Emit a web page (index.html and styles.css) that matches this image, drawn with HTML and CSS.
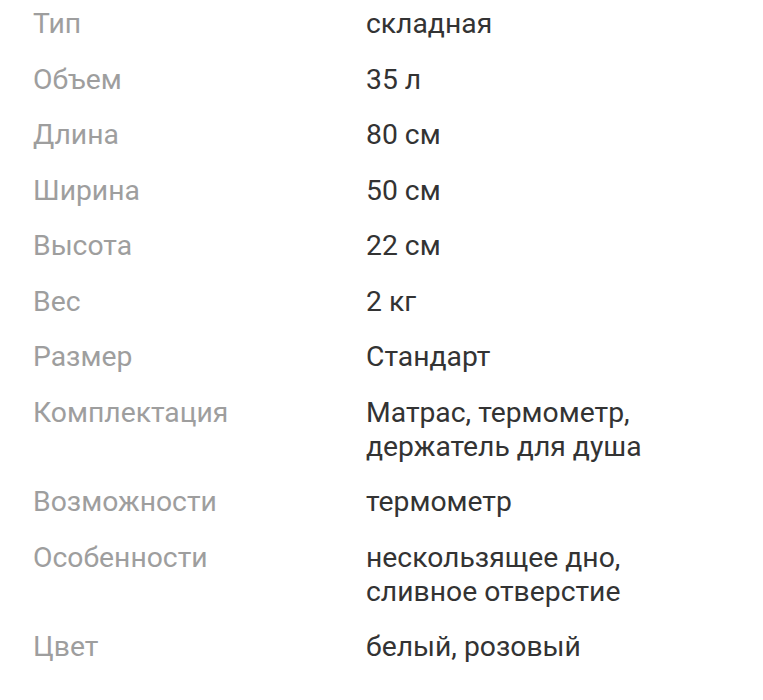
FILE: index.html
```html
<!DOCTYPE html>
<html lang="ru">
<head>
<meta charset="utf-8">
<link rel="stylesheet" href="styles.css">
</head>
<body>
<dl class="specs">
  <div class="row"><dt>Тип</dt><dd>складная</dd></div>
  <div class="row"><dt>Объем</dt><dd>35 л</dd></div>
  <div class="row"><dt>Длина</dt><dd>80 см</dd></div>
  <div class="row"><dt>Ширина</dt><dd>50 см</dd></div>
  <div class="row"><dt>Высота</dt><dd>22 см</dd></div>
  <div class="row"><dt>Вес</dt><dd>2 кг</dd></div>
  <div class="row"><dt>Размер</dt><dd>Стандарт</dd></div>
  <div class="row"><dt>Комплектация</dt><dd>Матрас, термометр,<br>держатель для душа</dd></div>
  <div class="row"><dt>Возможности</dt><dd>термометр</dd></div>
  <div class="row"><dt>Особенности</dt><dd>нескользящее дно,<br>сливное отверстие</dd></div>
  <div class="row"><dt>Цвет</dt><dd>белый, розовый</dd></div>
</dl>
</body>
</html>
```
FILE: styles.css
```css
html, body {
  margin: 0;
  padding: 0;
  background: #ffffff;
}
body {
  font-family: Roboto, "Noto Sans", sans-serif;
  font-size: 28.3px;
  line-height: 34px;
}
.specs {
  margin: 0;
  padding: 7px 0 0 33px;
  display: flex;
  flex-direction: column;
  gap: 21.5px;
}
.row {
  display: grid;
  grid-template-columns: 333px 1fr;
}
.row dt {
  color: #9e9e9e;
}
.row dd {
  margin: 0;
  color: #333333;
}
```
